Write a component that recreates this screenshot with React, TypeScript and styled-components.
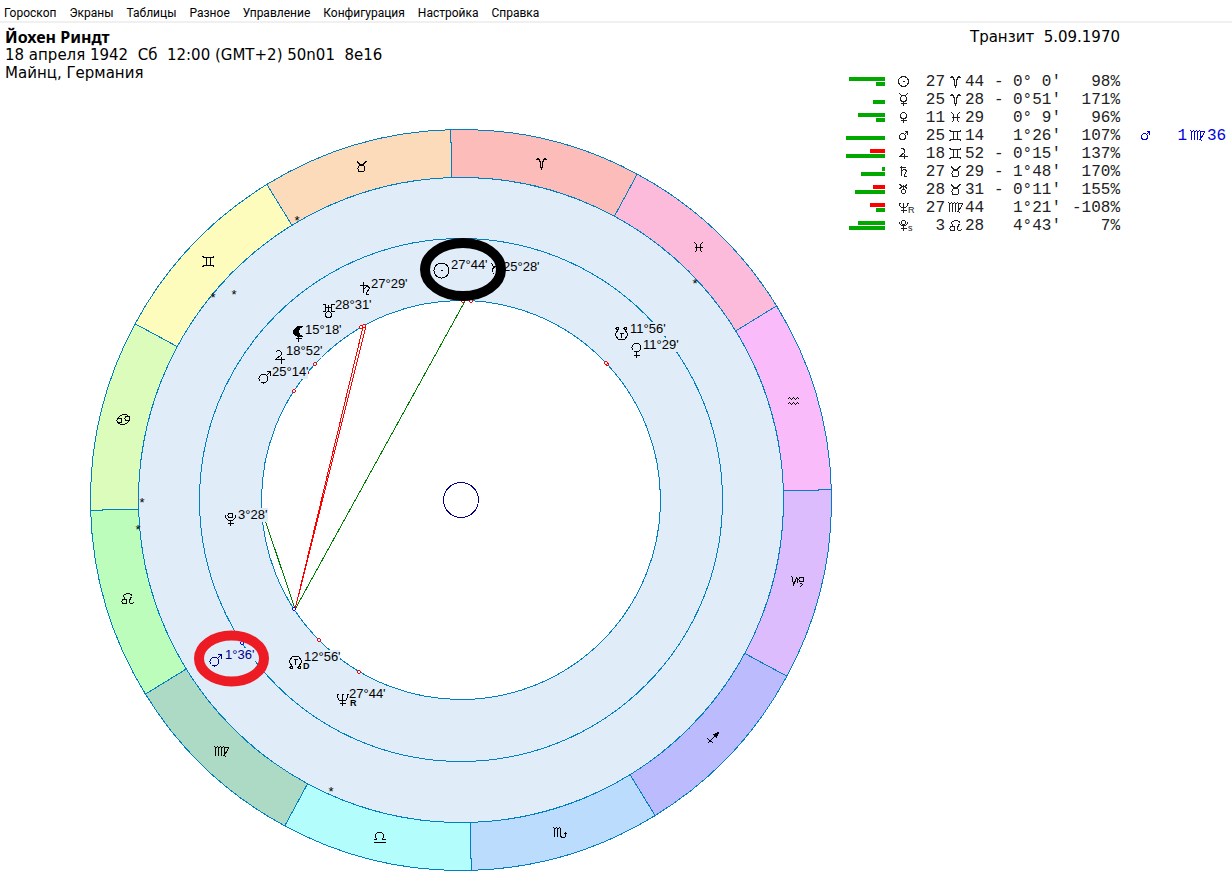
import React from 'react';
import styled, { createGlobalStyle } from 'styled-components';

const GlobalStyle = createGlobalStyle`
  * { box-sizing: border-box; }
  body {
    margin: 0;
    background: #ffffff;
    color: #000000;
    font-family: "DejaVu Sans", sans-serif;
  }
`;

const MenuBar = styled.nav`
  display: flex;
  height: 23px;
  padding: 4px 0 0 4px;
  gap: 13px;
  border-bottom: 2px solid #f0f0f0;
`;

const MenuButton = styled.button`
  border: 0;
  padding: 0;
  background: transparent;
  color: #000000;
  font: 12px/18px Roboto, sans-serif;
  white-space: nowrap;
`;

const Workspace = styled.main`
  display: flex;
  align-items: flex-start;
`;

const ChartColumn = styled.section`
  flex: 1;
  min-width: 0;
`;

const Person = styled.header`
  padding: 5px 0 2px 5px;
  font-size: 15px;
  line-height: 18px;
  white-space: pre;
`;

const PersonName = styled.h1`
  margin: 0;
  font: bold 16px/18px "Noto Sans", sans-serif;
`;

const PersonLine = styled.p`
  margin: 0;
`;

const Wheel = styled.svg`
  display: block;
  width: 100%;
  height: auto;
  font-family: "Liberation Sans", sans-serif;
`;

const DataColumn = styled.aside`
  flex: none;
  width: 392px;
  padding: 5px 4px 0 6px;
`;

const TransitTitle = styled.h2`
  margin: 0 108px 26px 0;
  font-size: 15px;
  font-weight: normal;
  line-height: 18px;
  text-align: right;
  white-space: pre;
`;

const PlanetTable = styled.table`
  width: 382px;
  table-layout: fixed;
  border-collapse: collapse;
  font: 16px/16px "Liberation Mono", monospace;
  white-space: pre;
`;

const Cell = styled.td<{ $align?: 'left' | 'right' | 'center'; $transit?: boolean }>`
  height: 18px;
  padding: 0;
  vertical-align: bottom;
  text-align: ${(p) => p.$align ?? 'left'};
  color: ${(p) => (p.$transit ? '#0000e0' : '#222222')};
`;

const GlyphIcon = styled.svg`
  display: block;
  width: 20px;
  height: 18px;
  margin: 0 auto;
  overflow: visible;
`;

const BarStack = styled.div`
  display: grid;
  grid-template-rows: 4px 4px;
  row-gap: 1px;
  justify-items: end;
  height: 18px;
  padding-top: 5px;
`;

const Bar = styled.span<{ $size: number; $negative?: boolean }>`
  width: ${(p) => p.$size}px;
  background: ${(p) => (p.$negative ? '#ff0000' : '#00a800')};
`;

const shapes: Record<string, React.ReactNode> = {
  aries: <path d="M-5 -3 L-4 -5 H-3 L-1 -1 V3 L0 5 L1 3 V-1 L3 -5 H4 L5 -3" />,
  taurus: <><path d="M-5 -5 H-4 L-3 -3 L-1 -2 H1 L3 -3 L4 -5 H5" /><circle cx="0" cy="2" r="3.5" /></>,
  gemini: <path d="M-6 -5 L-4 -4 H4 L6 -5 M-6 5 L-4 4 H4 L6 5 M-2 -4 V4 M2 -4 V4" />,
  cancer: <><circle cx="-4" cy="1" r="2.5" /><circle cx="4" cy="-1" r="2.5" /><path d="M-6 0 C-4 -5 1 -6 5 -4 M6 0 C4 5 -1 6 -5 4" /></>,
  leo: <><circle cx="-3" cy="3" r="2.5" /><path d="M-2 1 L-4 -2 C-3 -6 5 -6 4 -2 L2 2 V4 L3 5 H5 L6 4" /></>,
  virgo: <path d="M-7 -5 L-6 -4 V4 M-6 -3 L-4 -5 L-3 -4 V4 M-3 -3 L-1 -5 L0 -4 V4 M0 -3 L2 -5 L3 -4 V3 L4 6 M3 -4 H7 L6 -1 L3 3 L1 5" />,
  libra: <path d="M-6 5 H6 M-6 2 H-3 V1 L-4 0 V-3 L-2 -5 H2 L4 -3 V0 L3 1 V2 H6" />,
  scorpio: <path d="M-7 -5 L-6 -4 V4 M-6 -3 L-4 -5 L-3 -4 V4 M-3 -3 L-1 -5 L0 -4 V4 L2 5 H4 L5 4 V0 M4 2 L5 0 L7 2" />,
  sagittarius: <><path d="M-5 5 L5 -5 M-5 0 L1 5" /><path d="M1 -4 L6 -6 L4 -1 Z" fill="currentColor" /></>,
  capricorn: <><path d="M-6 -5 L-5 -4 L-4 4 L-1 -4 V-5 M0 -4 V1 M2 2 H4 L5 3 L3 5 H2" /><circle cx="4" cy="-2" r="2.5" /></>,
  aquarius: <path d="M-6 -1 L-4 -3 L-2 -1 L0 -3 L2 -1 L4 -3 L6 -1 M-6 4 L-4 2 L-2 4 L0 2 L2 4 L4 2 L6 4" />,
  pisces: <path d="M-4 -5 L-2 -3 V3 L-4 5 M4 -5 L2 -3 V3 L4 5 M-4 0 H4" />,
  sun: <><circle cx="0" cy="0" r="7.5" /><path d="M-1 0 H1" /></>,
  mercury: <><path d="M-5 -7 L-3 -4 H3 L5 -7" /><circle cx="0" cy="0" r="4" /><path d="M0 4 V9 M-3 6 H3" /></>,
  venus: <><circle cx="0" cy="-3" r="4.5" /><path d="M0 2 V7 M-3 5 H3" /></>,
  mars: <><circle cx="-1" cy="2" r="4.5" /><path d="M2 -1 L6 -5 M2 -5 H6 V-1" /></>,
  jupiter: <path d="M-4 -4 L-2 -6 H0 L2 -4 V-2 L-4 3 H5 M2 0 V7" />,
  saturn: <path d="M-2 -7 V4 M-6 -3 H2 M-2 1 L1 -2 H3 L4 0 L1 4 V6 H3" />,
  uranus: <><path d="M-6 -6 H-3 V1 H-6 M6 -6 H3 V1 H6 M-3 -3 H3 M0 -6 V1" /><circle cx="0" cy="4" r="3" /></>,
  neptune: <path d="M-5 -6 V-2 L-3 1 H3 L5 -2 V-6 M0 -6 V6 M-3 4 H3 M-6 -5 H-4 M4 -5 H6 M-1 -5 H1" />,
  pluto: <><path d="M-5 -5 V-2 L-2 1 H2 L5 -2 V-5 M0 1 V6 M-3 4 H3" /><circle cx="0" cy="-4" r="2.5" /></>,
  lilith: <><path d="M4 -7 H-1 L-5 -3 V0 L-1 3 H4 L1 1 L0 -2 L1 -5 Z" fill="currentColor" /><path d="M0 3 V8 M-3 5 H3" /></>,
  southNode: <><path d="M-3 -4 L-6 0 V2 L-3 6 H3 L6 2 V0 L3 -4 M-2 0 H2 M0 0 V4" /><circle cx="-4" cy="-5" r="1.5" /><circle cx="4" cy="-5" r="1.5" /></>,
  northNode: <><path d="M-3 4 L-6 0 V-2 L-3 -6 H3 L6 -2 V0 L3 4 M-2 -3 H2 M0 -3 V2" /><circle cx="-4" cy="5" r="1.5" /><circle cx="4" cy="5" r="1.5" /></>,
  sunSmall: <><circle cx="0" cy="0" r="5" /><path d="M-1 0 H1" /></>,
  mercurySmall: <><path d="M-4 -6 L-2 -4 H2 L4 -6" /><circle cx="0" cy="-1" r="3" /><path d="M0 2 V6 M-3 4 H3" /></>,
  venusSmall: <><circle cx="0" cy="-2" r="3" /><path d="M0 1 V5 M-3 3 H3" /></>,
  marsSmall: <><circle cx="-1" cy="1" r="3" /><path d="M1 -1 L4 -4 M1 -4 H4 V-1" /></>,
  jupiterSmall: <path d="M-3 -4 L-2 -5 H0 L1 -3 V-1 L-4 3 H4 M1 0 V5" />,
  saturnSmall: <path d="M-2 -6 V4 M-4 -4 H2 M-2 0 L0 -2 H2 L3 0 L1 3 V5 H3" />,
  uranusSmall: <><path d="M-4 -5 L-2 -4 V-2 L-4 -1 M4 -5 L2 -4 V-2 L4 -1 M-2 -3 H2 M0 -5 V0" /><circle cx="0" cy="2" r="2" /></>,
  neptuneSmall: <path d="M-4 -4 V-2 L-2 0 H2 L4 -2 V-4 M0 -5 V5 M-3 3 H3 M-5 -4 H-3 M3 -4 H5" />,
  plutoSmall: <><path d="M-4 -4 V-2 L-2 0 H2 L4 -2 V-4 M0 0 V5 M-3 3 H3" /><circle cx="0" cy="-3" r="2" /></>,
};

const Glyph = ({ name, x, y, color = '#000000' }: { name: string; x: number; y: number; color?: string }) => (
  <g
    transform={`translate(${x + 0.5} ${y + 0.5})`}
    color={color}
    stroke="currentColor"
    fill="none"
    shapeRendering="crispEdges"
  >
    {shapes[name]}
  </g>
);

const TableGlyph = ({ name, mark }: { name: string; mark?: string }) => (
  <GlyphIcon viewBox="0 0 20 18" role="img" aria-label={name.replace('Small', '')}>
    <g transform="translate(10.5 9.5)" stroke="currentColor" fill="none" shapeRendering="crispEdges">
      {shapes[name]}
    </g>
    {mark && <text x="15" y="15" fontSize="9" fontFamily="Liberation Sans" fill="currentColor">{mark}</text>}
  </GlyphIcon>
);

const menu = ['Гороскоп', 'Экраны', 'Таблицы', 'Разное', 'Управление', 'Конфигурация', 'Настройка', 'Справка'];

interface Planet {
  glyph: string;
  mark?: string;
  bars: [number, number];
  negative?: boolean;
  deg: string;
  sign: string;
  min: string;
  south?: boolean;
  decl: string;
  speed: string;
  transit?: { glyph: string; deg: string; sign: string; min: string };
}

const planets: Planet[] = [
  { glyph: 'sunSmall', bars: [36, 9], deg: '27', sign: 'aries', min: '44', south: true, decl: "0° 0'", speed: '98%' },
  { glyph: 'mercurySmall', bars: [0, 12], deg: '25', sign: 'aries', min: '28', south: true, decl: "0°51'", speed: '171%' },
  { glyph: 'venusSmall', bars: [27, 9], deg: '11', sign: 'pisces', min: '29', decl: "0° 9'", speed: '96%' },
  { glyph: 'marsSmall', bars: [0, 39], deg: '25', sign: 'gemini', min: '14', decl: "1°26'", speed: '107%', transit: { glyph: 'marsSmall', deg: '1', sign: 'virgo', min: '36' } },
  { glyph: 'jupiterSmall', bars: [15, 39], negative: true, deg: '18', sign: 'gemini', min: '52', south: true, decl: "0°15'", speed: '137%' },
  { glyph: 'saturnSmall', bars: [3, 24], deg: '27', sign: 'taurus', min: '29', south: true, decl: "1°48'", speed: '170%' },
  { glyph: 'uranusSmall', bars: [12, 30], negative: true, deg: '28', sign: 'taurus', min: '31', south: true, decl: "0°11'", speed: '155%' },
  { glyph: 'neptuneSmall', mark: 'R', bars: [15, 9], negative: true, deg: '27', sign: 'virgo', min: '44', decl: "1°21'", speed: '-108%' },
  { glyph: 'plutoSmall', mark: 's', bars: [27, 36], deg: '3', sign: 'leo', min: '28', decl: "4°43'", speed: '7%' },
];

const columns = [39, 36, 24, 20, 29, 19, 50, 57, 50, 17, 20, 21];

const signs = [
  { name: 'aries', fill: '#fcbcba', x: 541, y: 163 },
  { name: 'taurus', fill: '#fcdbbb', x: 361, y: 166 },
  { name: 'gemini', fill: '#fdfcbc', x: 208, y: 261 },
  { name: 'cancer', fill: '#dcfcbb', x: 123, y: 419 },
  { name: 'leo', fill: '#bcfdbc', x: 127, y: 598 },
  { name: 'virgo', fill: '#acdac5', x: 221, y: 751 },
  { name: 'libra', fill: '#b4fdfd', x: 379, y: 837 },
  { name: 'scorpio', fill: '#bbdcfc', x: 560, y: 832 },
  { name: 'sagittarius', fill: '#bcbbfd', x: 712, y: 738 },
  { name: 'capricorn', fill: '#dcbcfd', x: 797, y: 581 },
  { name: 'aquarius', fill: '#fabbfb', x: 793, y: 400 },
  { name: 'pisces', fill: '#fcbbdb', x: 698, y: 247 },
];

const bodies = [
  { glyph: 'sun', x: 441, y: 270, label: "27°44'", lx: 451, ly: 269 },
  { glyph: 'mercury', x: 496, y: 270, label: "25°28'", lx: 503, ly: 271 },
  { glyph: 'saturn', x: 365, y: 288, label: "27°29'", lx: 371, ly: 288 },
  { glyph: 'uranus', x: 328, y: 310, label: "28°31'", lx: 335, ly: 309 },
  { glyph: 'lilith', x: 298, y: 333, label: "15°18'", lx: 305, ly: 334 },
  { glyph: 'jupiter', x: 279, y: 356, label: "18°52'", lx: 286, ly: 355 },
  { glyph: 'mars', x: 264, y: 376, label: "25°14'", lx: 272, ly: 376 },
  { glyph: 'southNode', x: 621, y: 333, label: "11°56'", lx: 630, ly: 333 },
  { glyph: 'venus', x: 636, y: 350, label: "11°29'", lx: 643, ly: 349 },
  { glyph: 'pluto', x: 230, y: 519, label: "3°28'", lx: 238, ly: 519 },
  { glyph: 'northNode', x: 295, y: 662, label: "12°56'", lx: 304, ly: 661, mark: 'D', mx: 303, my: 669 },
  { glyph: 'neptune', x: 342, y: 699, label: "27°44'", lx: 349, ly: 698, mark: 'R', mx: 350, my: 706 },
  { glyph: 'mars', x: 215, y: 659, label: "1°36'", lx: 225, ly: 659, color: '#000090' },
];

const stars = [[297, 219], [213, 296], [234, 293], [142, 501], [138, 528], [331, 790], [695, 282]];

// Ecliptic longitudes of the natal bodies, in degrees from 0° Aries.
const natal = [27.73, 25.47, 57.48, 58.52, 75.3, 78.87, 85.23, 341.48, 341.93, 162.93, 177.73];
const transitMars = 151.6;

const CX = 461;
const CY = 500;
const OUTER = 370.5;
const ZODIAC = 322.5;
const MIDDLE = 261.5;
const INNER = 199.5;
const OFFSET = 61.6;

const point = (longitude: number, radius: number) => {
  const a = ((longitude + OFFSET) * Math.PI) / 180;
  return [CX + radius * Math.cos(a), CY - radius * Math.sin(a)];
};

const sector = (index: number) => {
  const a = index * 30;
  const b = a + 30;
  return `M${point(a, OUTER)} A${OUTER} ${OUTER} 0 0 0 ${point(b, OUTER)} L${point(b, ZODIAC)} A${ZODIAC} ${ZODIAC} 0 0 1 ${point(a, ZODIAC)} Z`;
};

const Aspect = ({ to, color }: { to: number; color: string }) => {
  const [x1, y1] = point(transitMars, INNER);
  const [x2, y2] = point(to, INNER);
  return <line x1={x1 + 1} y1={y1} x2={x2 + 2} y2={y2} stroke={color} />;
};

const Marker = ({ at, radius, color, fill }: { at: number; radius: number; color: string; fill: string }) => {
  const [x, y] = point(at, radius);
  return (
    <g transform={`translate(${Math.round(x)} ${Math.round(y)})`}>
      <rect x="-1" y="-1" width="2" height="2" fill={fill} />
      <path d="M-1 -1.5 H1 M-1 1.5 H1 M-1.5 -1 V1 M1.5 -1 V1" stroke={color} />
    </g>
  );
};

const NatalWheel = () => (
  <Wheel viewBox="0 84 840 796" role="img" aria-label="Натальная карта">
    <g stroke="#0080c0" shapeRendering="crispEdges">
      {signs.map((s, i) => <path key={s.name} d={sector(i)} fill={s.fill} />)}
      <circle cx={CX} cy={CY} r={ZODIAC} fill="#e0ecf8" />
      <circle cx={CX} cy={CY} r={MIDDLE} fill="none" />
      <circle cx={CX} cy={CY} r={INNER} fill="#ffffff" />
      <circle cx={CX} cy={CY} r="17.5" fill="none" stroke="#000080" />
    </g>
    <g shapeRendering="crispEdges">
      <Aspect to={27.73} color="#008000" />
      <Aspect to={123.47} color="#008000" />
      <Aspect to={57.48} color="#ff0000" />
      <Aspect to={58.52} color="#ff0000" />
      {natal.map((n) => <Marker key={n} at={n} radius={INNER} color="#ff0000" fill="#ffffff" />)}
      <Marker at={transitMars} radius={INNER} color="#0000ff" fill="#ffffff" />
      <Marker at={transitMars} radius={MIDDLE} color="#0000ff" fill="#e0ecf8" />
    </g>
    {signs.map((s) => <Glyph key={s.name} name={s.name} x={s.x} y={s.y} />)}
    {stars.map(([x, y]) => (
      <text key={x} x={x} y={y + 6} fontSize="13" textAnchor="middle">*</text>
    ))}
    {bodies.map((b) => (
      <g key={b.glyph + b.lx}>
        <rect x={b.lx} y={b.ly - 11} width={b.label.length * 6} height="14" fill="#e0ecf8" />
        <Glyph name={b.glyph} x={b.x} y={b.y} color={b.color} />
        <text x={b.lx} y={b.ly} fontSize="13" fill={b.color ?? '#000000'}>{b.label}</text>
        {b.mark && <text x={b.mx} y={b.my} fontSize="9" fontWeight="bold">{b.mark}</text>}
      </g>
    ))}
    <ellipse cx="463" cy="269.5" rx="38" ry="26.5" fill="none" stroke="#000000" strokeWidth="10" />
    <ellipse cx="231.5" cy="658.5" rx="32.5" ry="23" fill="none" stroke="#ed1c24" strokeWidth="10" />
  </Wheel>
);

const PlanetRow = ({ planet: p }: { planet: Planet }) => (
  <tr>
    <Cell>
      <BarStack>
        <Bar $size={p.bars[0]} $negative={p.negative} />
        <Bar $size={p.bars[1]} />
      </BarStack>
    </Cell>
    <Cell $align="center"><TableGlyph name={p.glyph} mark={p.mark} /></Cell>
    <Cell $align="right">{p.deg}</Cell>
    <Cell $align="center"><TableGlyph name={p.sign} /></Cell>
    <Cell>{p.min}</Cell>
    <Cell>{p.south ? '-' : ''}</Cell>
    <Cell>{p.decl}</Cell>
    <Cell $align="right">{p.speed}</Cell>
    <Cell $transit>{p.transit && <TableGlyph name={p.transit.glyph} />}</Cell>
    <Cell $transit $align="right">{p.transit?.deg}</Cell>
    <Cell $transit>{p.transit && <TableGlyph name={p.transit.sign} />}</Cell>
    <Cell $transit>{p.transit?.min}</Cell>
  </tr>
);

export default function App() {
  return (
    <>
      <GlobalStyle />
      <MenuBar>
        {menu.map((item) => <MenuButton key={item} type="button">{item}</MenuButton>)}
      </MenuBar>
      <Workspace>
        <ChartColumn>
          <Person>
            <PersonName>Йохен Риндт</PersonName>
            <PersonLine>{'18 апреля 1942  Сб  12:00 (GMT+2) 50n01  8e16'}</PersonLine>
            <PersonLine>Майнц, Германия</PersonLine>
          </Person>
          <NatalWheel />
        </ChartColumn>
        <DataColumn>
          <TransitTitle>{'Транзит  5.09.1970'}</TransitTitle>
          <PlanetTable>
            <colgroup>
              {columns.map((width, i) => <col key={i} width={width} />)}
            </colgroup>
            <tbody>
              {planets.map((p) => <PlanetRow key={p.glyph} planet={p} />)}
            </tbody>
          </PlanetTable>
        </DataColumn>
      </Workspace>
    </>
  );
}
